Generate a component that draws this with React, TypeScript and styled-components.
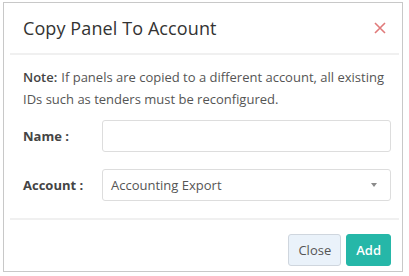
import React, { FC, useState } from "react";
import styled, { createGlobalStyle } from "styled-components";

const GlobalStyle = createGlobalStyle`
  body {
    margin: 0;
    background: #ffffff;
    font-family: "Open Sans", "Noto Sans", sans-serif;
    color: #555555;
  }
`;

const Modal = styled.div`
  box-sizing: border-box;
  width: 400px;
  height: 270px;
  margin: 2px 0 0 3px;
  border: 1px solid #c8c8c8;
  background: #ffffff;
  display: flex;
  flex-direction: column;
`;

const Header = styled.div`
  box-sizing: border-box;
  height: 53px;
  margin: 0 3px 0 6px;
  padding: 0 13px 0 13px;
  display: flex;
  align-items: center;
  justify-content: space-between;
  border-bottom: 2px solid #f0f0f0;
`;

const Title = styled.h4`
  margin: 0;
  font-size: 18px;
  font-weight: 400;
  color: #333333;
  letter-spacing: 0.1px;
`;

const CloseX = styled.button`
  border: 0;
  background: none;
  padding: 0;
  width: 12px;
  height: 12px;
  display: flex;
  cursor: pointer;
`;

const Body = styled.div`
  padding: 11px 11px 0 19px;
  flex: 1;
`;

const Note = styled.p`
  margin: 0 0 10px;
  font-size: 13px;
  line-height: 22px;
  color: #555555;
`;

const NoteTag = styled.span`
  font-weight: 600;
  color: #444444;
  margin-right: 4px;
`;

const Row = styled.div`
  display: flex;
  align-items: center;
  margin-bottom: 17px;
`;

const Label = styled.label`
  width: 79px;
  font-size: 13px;
  font-weight: 700;
  color: #444444;
`;

const Field = styled.input`
  box-sizing: border-box;
  flex: 1;
  height: 32px;
  border: 1px solid #dddddd;
  border-radius: 3px;
  padding: 0 8px;
  font-family: inherit;
  font-size: 13px;
  outline: none;
`;

const SelectBox = styled.div`
  box-sizing: border-box;
  flex: 1;
  height: 32px;
  border: 1px solid #dddddd;
  border-radius: 3px;
  padding: 0 13px 0 8px;
  display: flex;
  align-items: center;
  justify-content: space-between;
  font-size: 13px;
  color: #555555;
`;

const Caret = styled.span`
  width: 0;
  height: 0;
  border-left: 3.5px solid transparent;
  border-right: 3.5px solid transparent;
  border-top: 4px solid #8a8a8a;
`;

const Footer = styled.div`
  margin: 0 3px 0 6px;
  padding: 14px 8px 5px 0;
  border-top: 2px solid #f0f0f0;
  display: flex;
  justify-content: flex-end;
  gap: 5px;
`;

const Button = styled.button<{ $primary?: boolean }>`
  box-sizing: border-box;
  height: 32px;
  padding: 0 9px;
  border-radius: 3px;
  font-family: inherit;
  font-size: 13px;
  cursor: pointer;
  border: 1px solid ${p => (p.$primary ? "#26b7a8" : "#cfd6de")};
  background: ${p => (p.$primary ? "#26b7a8" : "#eaf2fa")};
  color: ${p => (p.$primary ? "#ffffff" : "#555555")};
  font-weight: ${p => (p.$primary ? 600 : 400)};
`;

const App: FC = () => {
  const [name, setName] = useState("");

  return (
    <>
      <GlobalStyle />
      <Modal>
        <Header>
          <Title>Copy Panel To Account</Title>
          <CloseX aria-label="Close">
            <svg width="12" height="12" viewBox="0 0 12 12">
              <path d="M1 1 L11 11 M11 1 L1 11" stroke="#e07a7a" strokeWidth="1.6" />
            </svg>
          </CloseX>
        </Header>
        <Body>
          <Note>
            <NoteTag>Note:</NoteTag>If panels are copied to a different account, all existing IDs
            such as tenders must be reconfigured.
          </Note>
          <Row>
            <Label>Name :</Label>
            <Field value={name} onChange={e => setName(e.target.value)} />
          </Row>
          <Row>
            <Label>Account :</Label>
            <SelectBox>
              <span>Accounting Export</span>
              <Caret />
            </SelectBox>
          </Row>
        </Body>
        <Footer>
          <Button>Close</Button>
          <Button $primary>Add</Button>
        </Footer>
      </Modal>
    </>
  );
};

export default App;
